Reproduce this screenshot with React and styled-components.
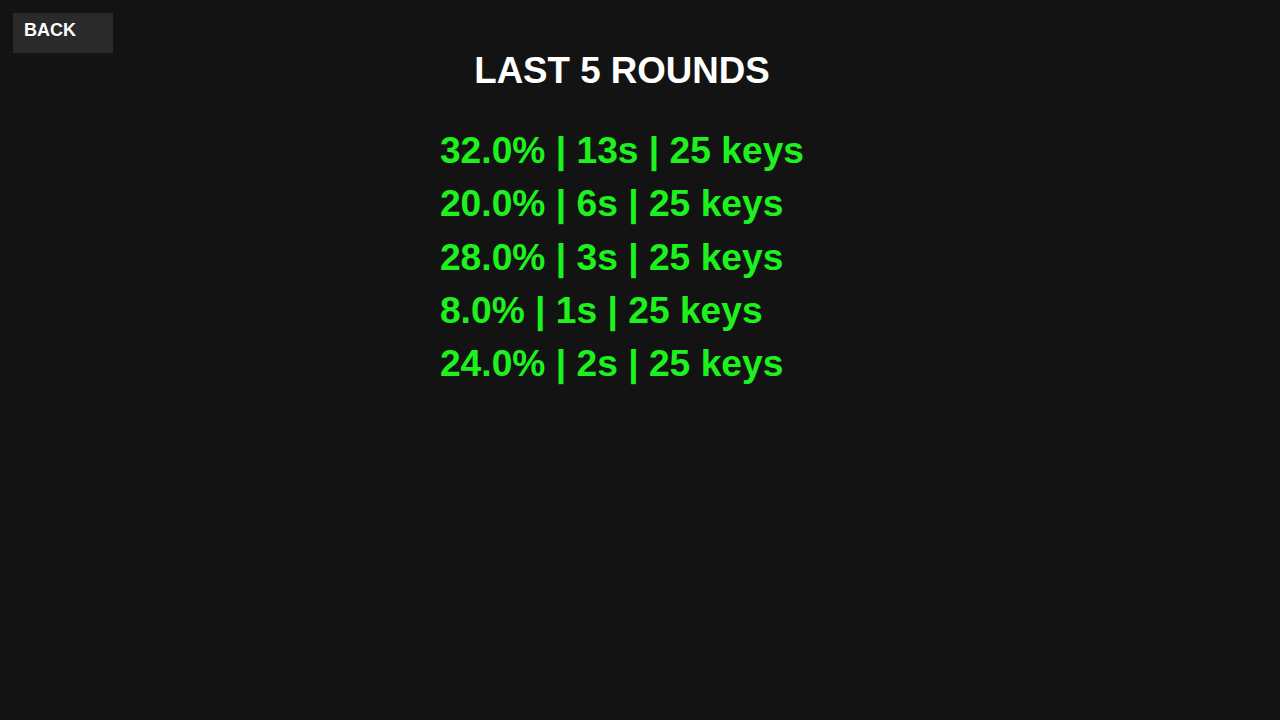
import React from "react";
import styled, { createGlobalStyle } from "styled-components";

const GlobalStyle = createGlobalStyle`
    html, body {
        margin: 0;
        padding: 0;
        background: #131313;
        font-family: "Liberation Sans", Arial, sans-serif;
    }
`;

const Page = styled.main`
    position: relative;
    width: 1280px;
    height: 720px;
    background: #131313;
    overflow: hidden;
`;

const BackButton = styled.button`
    position: absolute;
    top: 13px;
    left: 13px;
    width: 100px;
    height: 40px;
    padding: 7px 0 0 11px;
    border: none;
    background: #2a2a2a;
    color: #ffffff;
    font-family: "Liberation Sans", Arial, sans-serif;
    font-weight: 700;
    font-size: 18px;
    display: flex;
    align-items: flex-start;
    cursor: pointer;
`;

const Content = styled.section`
    display: flex;
    flex-direction: column;
    align-items: center;
    padding: 47px 36px 0 0;
`;

const Title = styled.h1`
    margin: 0 0 29px;
    color: #ffffff;
    font-size: 36.7px;
    font-weight: 700;
    line-height: 48px;
`;

const List = styled.div`
    display: flex;
    flex-direction: column;
`;

const Row = styled.div`
    color: #1ef21e;
    font-size: 37.2px;
    font-weight: 700;
    line-height: 53.3px;
    white-space: nowrap;
`;

const rounds = [
    { acc: "32.0", time: 13, keys: 25 },
    { acc: "20.0", time: 6, keys: 25 },
    { acc: "28.0", time: 3, keys: 25 },
    { acc: "8.0", time: 1, keys: 25 },
    { acc: "24.0", time: 2, keys: 25 },
];

function App() {
    return (
        <Page>
            <GlobalStyle />
            <BackButton>BACK</BackButton>
            <Content>
                <Title>LAST 5 ROUNDS</Title>
                <List>
                    {rounds.map((r, i) => (
                        <Row key={i}>
                            {r.acc}% | {r.time}s | {r.keys} keys
                        </Row>
                    ))}
                </List>
            </Content>
        </Page>
    );
}

export default App;
